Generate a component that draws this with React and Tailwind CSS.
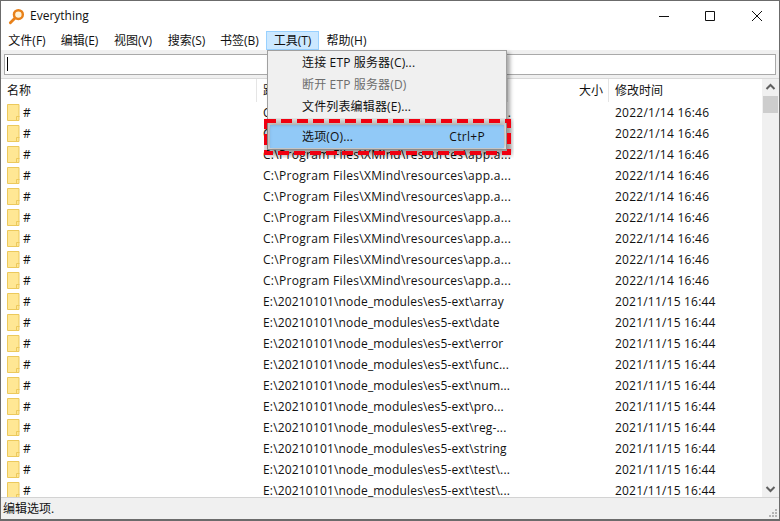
import React from "react";

const menus = [
  ["文件(F)", "w-[52px]"],
  ["编辑(E)", "w-[53px]"],
  ["视图(V)", "w-[54px]"],
  ["搜索(S)", "w-[53px]"],
  ["书签(B)", "w-[53px]"],
  ["工具(T)", "w-[53px]"],
  ["帮助(H)", "w-[55px]"],
];

const cPath = "C:\\Program Files\\XMind\\resources\\app.a...";
const ePath = "E:\\20210101\\node_modules\\es5-ext\\";
const cDate = "2022/1/14 16:46";
const eDate = "2021/11/15 16:44";

const rows = [
  ...Array(9).fill(null).map(() => [cPath, cDate, true]),
  ...["array", "date", "error", "func...", "num...", "pro...", "reg-...", "string", "test\\...", "test\\..."].map((s) => [ePath + s, eDate, false]),
];

const FolderIcon = () => (
  <svg width="13" height="17" viewBox="0 0 13 17" className="shrink-0">
    <path d="M.5.5h11.5v16H.5z" fill="#ffe794" stroke="#ecc95c" />
    <path d="M9.5 16.5v-4h3" fill="none" stroke="#ecc95c" />
  </svg>
);

const Row = ({ path, date, isC }) => (
  <div className="flex h-[21px] items-center">
    <div className="flex w-[256px] items-center gap-[3px] pl-[6px]">
      <FolderIcon />
      <span>#</span>
    </div>
    <div className={`w-[352px] pl-[6px] whitespace-nowrap ${isC ? "tracking-[0.3px]" : "tracking-[0.17px]"}`}>{path}</div>
    <div className={`pl-[6px] whitespace-nowrap ${isC ? "tracking-[0.25px]" : "tracking-[0.2px]"}`}>{date}</div>
  </div>
);

const MenuItem = ({ label, shortcut, muted, active }) => (
  <div
    className={`flex items-center justify-between pr-[19px] tracking-[0.15px] ${
      active ? "h-[23px] bg-[#91c9f7] pl-[32px]" : "h-[22px] pl-[34px]"
    } ${muted ? "text-[#6d6d6d]" : ""}`}
  >
    <span>{label}</span>
    {shortcut && <span className="tracking-[0.3px]">{shortcut}</span>}
  </div>
);

export default function App() {
  return (
    <div
      className="relative flex h-[521px] w-[780px] flex-col overflow-hidden border-x-[1px] border-b-[2px] border-t-[1px] border-[#6b6b6b] bg-white text-[12px] text-[#111]"
      style={{ fontFamily: '"Open Sans", "Noto Sans CJK SC", sans-serif' }}
    >
      {/* title bar */}
      <div className="flex h-[30px] items-center">
        <svg width="17" height="17" viewBox="0 0 18 18" className="ml-[7px]">
          <circle cx="11" cy="7" r="4.7" fill="#fff3d8" stroke="#e8811a" strokeWidth="2.6" />
          <path d="M7.5 10.5 2.5 15.5" stroke="#e8811a" strokeWidth="3" strokeLinecap="round" />
        </svg>
        <span className="ml-[5px] text-[12px]">Everything</span>
        <div className="ml-auto flex items-center">
          <svg width="12" height="12" viewBox="0 0 12 12" className="mr-[34px]">
            <path d="M1 6.5h10" stroke="#111" />
          </svg>
          <svg width="12" height="12" viewBox="0 0 12 12" className="mr-[35px]">
            <path d="M1.5 1.5h9v9h-9z" fill="none" stroke="#111" />
          </svg>
          <svg width="12" height="12" viewBox="0 0 12 12" className="mr-[16px]">
            <path d="M1 1l10 10M11 1 1 11" stroke="#111" />
          </svg>
        </div>
      </div>

      {/* menu bar */}
      <div className="flex h-[19px] items-center">
        {menus.map(([label, w]) => (
          <div
            key={label}
            className={`flex h-[19px] items-center justify-center ${w} ${
              label === "工具(T)" ? "border border-[#99d1ff] bg-[#cce8ff]" : ""
            }`}
          >
            {label}
          </div>
        ))}
      </div>

      {/* search box */}
      <div className="flex h-[28px] items-center bg-[#f0f0f0] px-[3px]">
        <div className="flex h-[21px] w-full items-center border border-[#a9a9a9] bg-white pl-[2px]">
          <div className="h-[14px] w-px bg-black" />
        </div>
      </div>

      {/* list */}
      <div className="flex min-h-0 flex-1">
        <div className="min-w-0 flex-1 overflow-hidden">
          <div className="flex h-[24px] items-center border-t border-[#d9d9d9]">
            <div className="h-full w-[256px] border-r border-[#e5e5e5] pl-[6px] leading-[23px]">名称</div>
            <div className="h-full w-[251px] border-r border-[#e5e5e5] pl-[6px] leading-[23px]">路径</div>
            <div className="h-full w-[101px] border-r border-[#e5e5e5] pr-[5px] text-right leading-[23px]">大小</div>
            <div className="h-full pl-[6px] leading-[23px]">修改时间</div>
          </div>
          {rows.map(([path, date, isC], i) => (
            <Row key={i} path={path} date={date} isC={isC} />
          ))}
        </div>
        {/* scrollbar */}
        <div className="flex w-[17px] flex-col items-center border-t border-[#d9d9d9] bg-[#f0f0f0]">
          <svg width="17" height="17" viewBox="0 0 17 17" className="shrink-0">
            <path d="M4.5 10 8.5 6l4 4" fill="none" stroke="#606060" strokeWidth="2" />
          </svg>
          <div className="h-[17px] w-[15px] bg-[#cdcdcd]" />
          <svg width="17" height="17" viewBox="0 0 17 17" className="mt-auto shrink-0">
            <path d="M4.5 7 8.5 11l4-4" fill="none" stroke="#606060" strokeWidth="2" />
          </svg>
        </div>
      </div>

      {/* status bar */}
      <div className="relative flex h-[22px] items-center border-t border-[#d3d3d3] bg-[#f0f0f0] pl-[2px]">
        编辑选项.
        <svg width="12" height="12" viewBox="0 0 12 12" className="absolute bottom-0 right-[1px]">
          <path d="M9 2h2v2H9zM6 5h2v2H6zM9 5h2v2H9zM3 8h2v2H3zM6 8h2v2H6zM9 8h2v2H9z" fill="#b5b5b5" />
        </svg>
      </div>

      {/* dropdown */}
      <div className="absolute left-[266px] top-[49px] w-[240px] border border-[#a0a0a0] bg-[#f0f0f0] pt-[1px] pb-[1px] shadow-[3px_3px_4px_rgba(0,0,0,0.35)]">
        <MenuItem label="连接 ETP 服务器(C)..." />
        <MenuItem label="断开 ETP 服务器(D)" muted />
        <MenuItem label="文件列表编辑器(E)..." />
        <div className="h-[7px]" />
        <div className="mx-[2px] shadow-[0_0_4px_rgba(0,0,0,0.4)]">
          <MenuItem label="选项(O)..." shortcut="Ctrl+P" active />
        </div>
      </div>

      {/* annotation */}
      <svg width="250" height="40" viewBox="0 0 250 40" className="absolute left-[263px] top-[117px]">
        <rect x="2" y="4" width="244" height="32" fill="none" stroke="#000" strokeOpacity="0.25" strokeWidth="4" style={{ filter: "blur(2px)" }} />
        <rect x="1" y="3" width="244" height="32" fill="none" stroke="#f00010" strokeWidth="4" strokeDasharray="11 5" />
      </svg>
    </div>
  );
}
